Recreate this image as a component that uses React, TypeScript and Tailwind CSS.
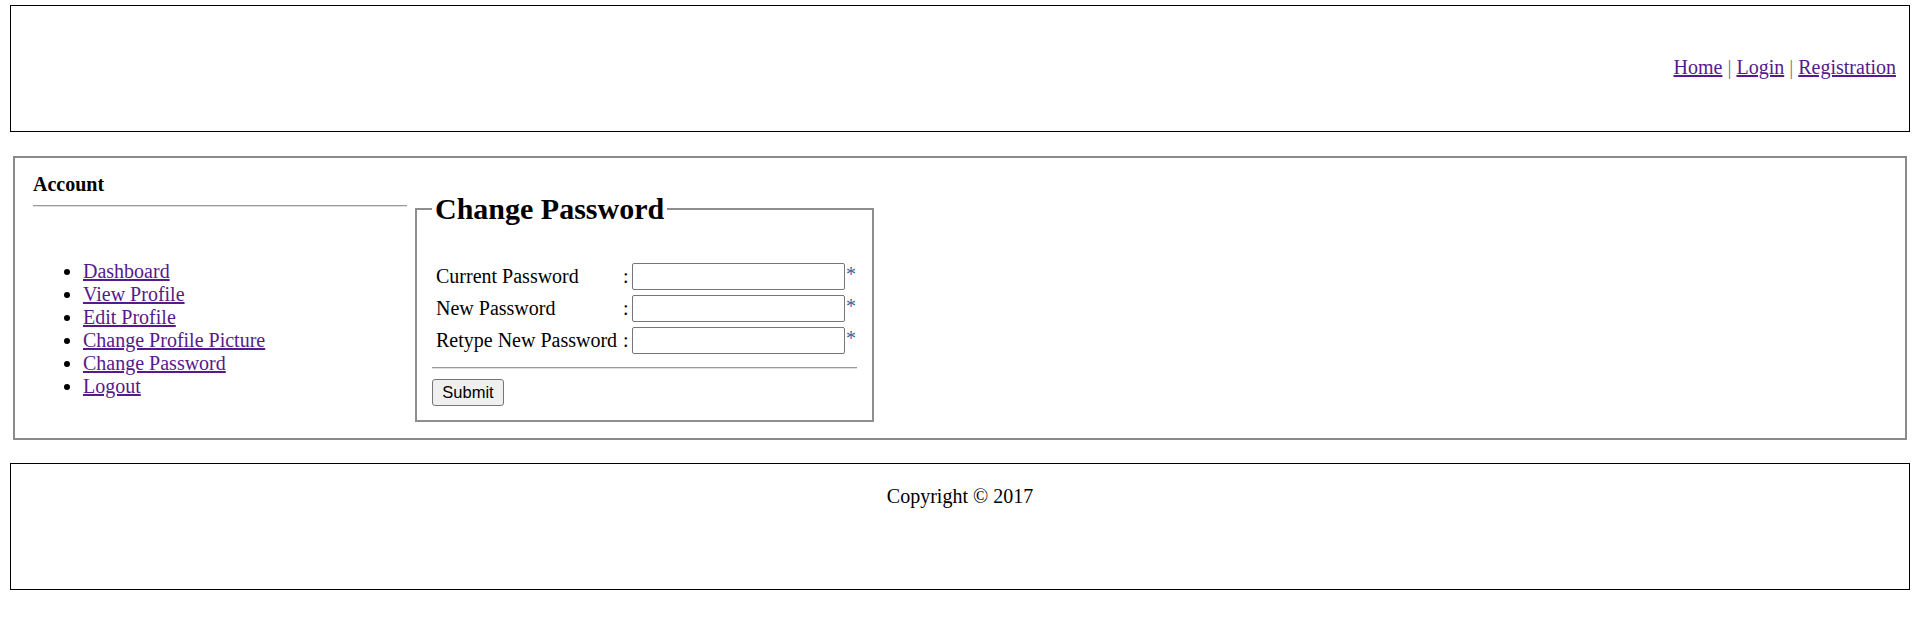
export default function App() {
  const links = ['Dashboard', 'View Profile', 'Edit Profile', 'Change Profile Picture', 'Change Password', 'Logout'];
  const rows = ['Current Password', 'New Password', 'Retype New Password'];

  return (
    <div className="bg-white text-black text-[20px] leading-[23px] font-['Liberation_Serif','Times_New_Roman',serif] pt-[5px] pb-[50px]">
      {/* header */}
      <div className="mx-[10px] h-[127px] border border-black pt-[50px] pr-[13px] text-right">
        <a href="#" className="underline text-[#551a8b]">Home</a>
        <span className="text-[#777]"> | </span>
        <a href="#" className="underline text-[#551a8b]">Login</a>
        <span className="text-[#777]"> | </span>
        <a href="#" className="underline text-[#551a8b]">Registration</a>
      </div>

      {/* main */}
      <div className="mx-[13px] mt-[24px] border-2 border-[#8a8a8a] pl-[18px] pt-[15px] pb-[16px] flex items-start gap-[8px]">
        <div className="w-[374px]">
          <h4 className="font-bold">Account</h4>
          <div className="mt-[9px] border-t border-b border-t-[#9a9a9a] border-b-[#e0e0e0]" />
          <ul className="mt-[53px] pl-[50px] list-disc">
            {links.map((l) => (
              <li key={l}>
                <a href="#" className="underline text-[#551a8b]">{l}</a>
              </li>
            ))}
          </ul>
        </div>

        <fieldset className="mt-[19px] w-[459px] border-2 border-[#8e8e8e] px-[15px] pb-[14px]">
          <legend className="px-[3px] text-[30px] leading-[34px] font-bold">Change Password</legend>
          <div className="pt-[37px] grid grid-cols-[188px_12px_213px_auto] gap-y-[5px] items-center">
            {rows.map((r) => (
              <div key={r} className="contents">
                <div className="pl-[4px] whitespace-nowrap">{r}</div>
                <div className="pl-[3px]">:</div>
                <input type="password" className="h-[27px] w-[213px] border border-[#767676] rounded-[2px] bg-white" />
                <div className="pl-[1px] self-start text-[#336699] leading-[22px]">*</div>
              </div>
            ))}
          </div>
          <div className="mt-[13px] border-t border-b border-t-[#9a9a9a] border-b-[#e0e0e0]" />
          <button className="mt-[10px] h-[27px] w-[72px] border border-[#767676] rounded-[3px] bg-[#efefef] text-[16.5px] font-['Liberation_Sans',Arial,sans-serif] leading-none">
            Submit
          </button>
        </fieldset>
      </div>

      {/* footer */}
      <div className="mx-[10px] mt-[23px] h-[127px] border border-black pt-[21px] text-center">
        Copyright © 2017
      </div>
    </div>
  );
}
